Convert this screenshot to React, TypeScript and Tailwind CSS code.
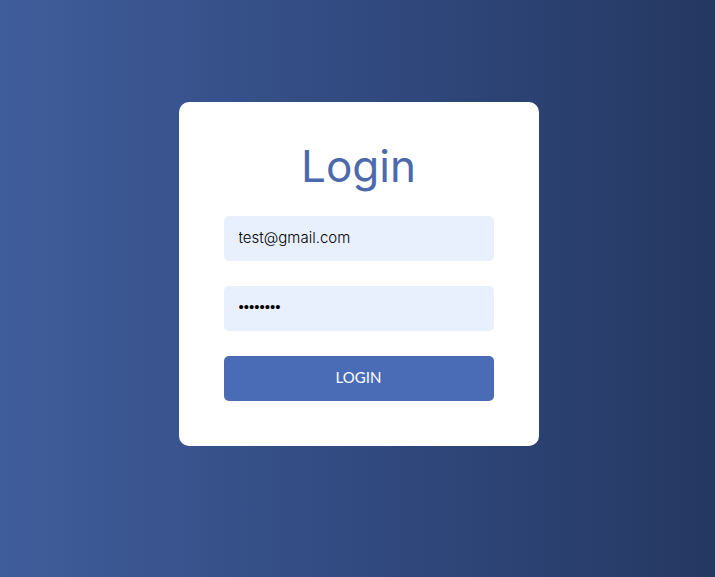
import React, { useState } from "react";

const inputStyles =
  "h-[45px] w-full rounded-[5px] bg-[#e8f0fe] px-[15px] text-[15px] text-black outline-none";

const LoginForm = () => {
  const [email, setEmail] = useState("test@gmail.com");
  const [password, setPassword] = useState("password");

  return (
    <form
      onSubmit={(e) => e.preventDefault()}
      className="flex w-full max-w-[360px] flex-col gap-[25px] rounded-[10px] bg-white px-[45px] pt-9 pb-[45px]"
    >
      <h1 className="-mb-1 text-center font-['Inter',sans-serif] text-[44px] leading-[57px] font-normal text-[#4b69ac]">
        Login
      </h1>
      <input
        type="email"
        aria-label="Email"
        value={email}
        onChange={(e) => setEmail(e.target.value)}
        className={`${inputStyles} pb-0.5 font-['Inter',sans-serif] font-light`}
      />
      <input
        type="password"
        aria-label="Password"
        value={password}
        onChange={(e) => setPassword(e.target.value)}
        className={`${inputStyles} pb-1 font-['Liberation_Sans',sans-serif]`}
      />
      <button
        type="submit"
        className="h-[45px] w-full cursor-pointer rounded-[5px] bg-[#4a6bb5] pb-0.5 font-['Lato',sans-serif] text-[15px] text-white uppercase"
      >
        Login
      </button>
    </form>
  );
};

export default function App() {
  return (
    <main className="flex min-h-screen items-center justify-center bg-linear-to-r/srgb from-[#405d9b] via-[#314a80] to-[#253862] pr-4 pb-[30px] pl-[18px]">
      <LoginForm />
    </main>
  );
}
